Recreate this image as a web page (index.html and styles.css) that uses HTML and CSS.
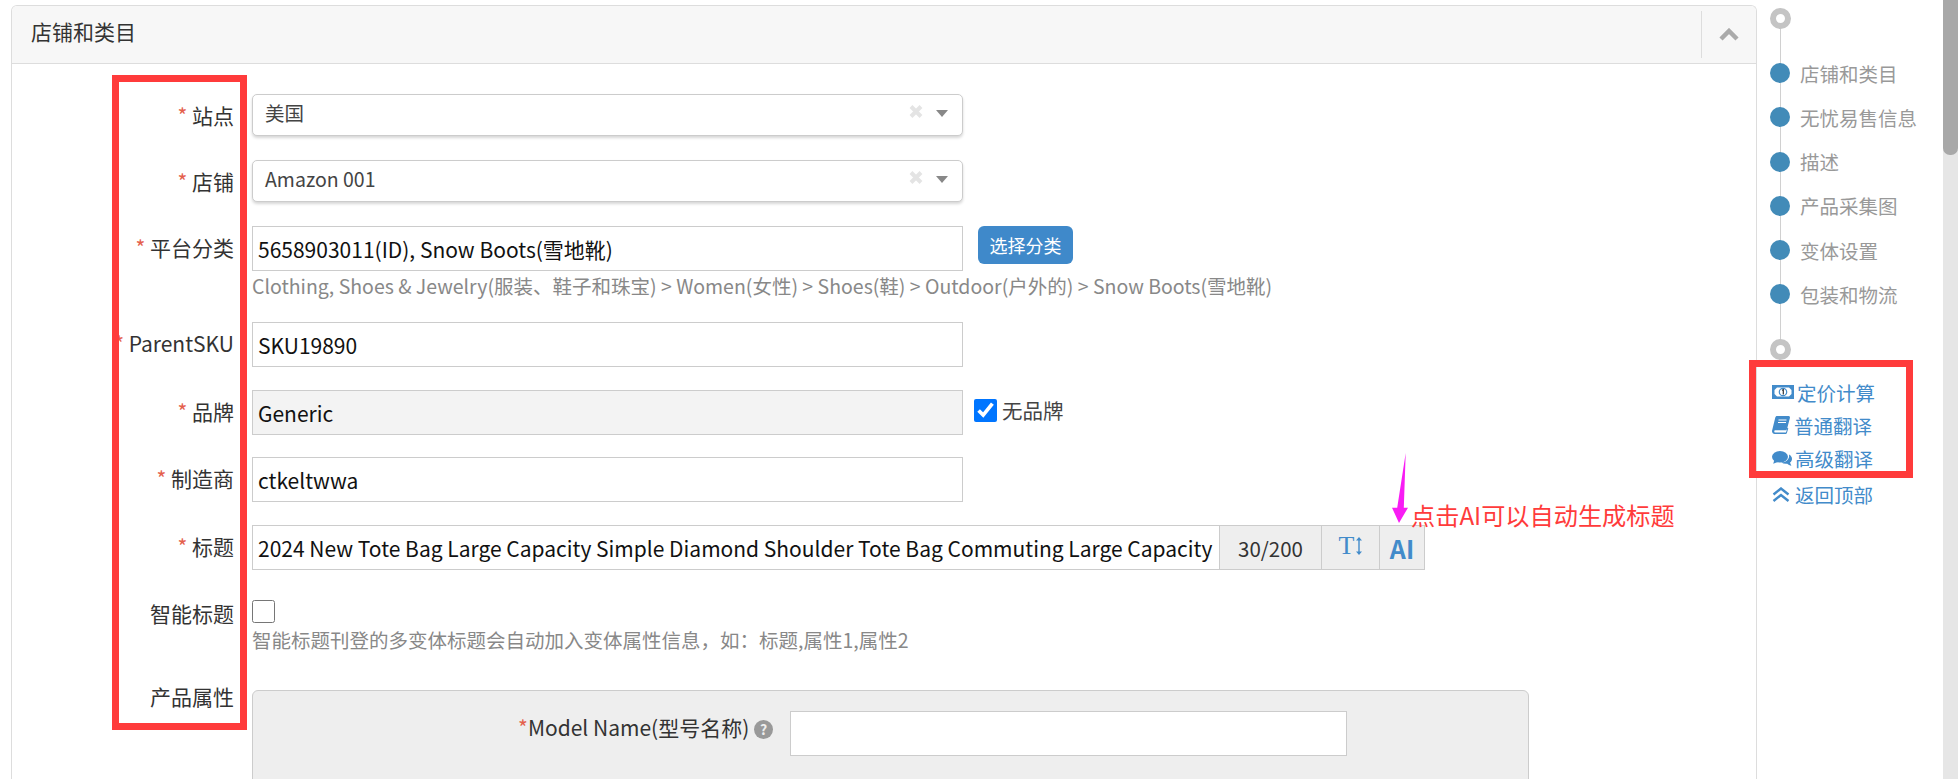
FILE: index.html
```html
<!DOCTYPE html>
<html lang="zh-CN">
<head>
<meta charset="utf-8">
<title>店铺和类目</title>
<link rel="stylesheet" href="styles.css">
</head>
<body>
<div class="page">
  <main class="main">
    <section class="panel">
      <header class="panel-head">
        <h2 class="panel-title">店铺和类目</h2>
        <div class="collapse">
          <svg class="chev" viewBox="0 0 20 13"><path d="M2 11 10 3l8 8" fill="none" stroke="#aaa" stroke-width="4.5"/></svg>
        </div>
      </header>
      <form class="form">
        <div class="row h66">
          <label class="lbl lbl-select"><i>*</i> 站点</label>
          <div class="select"><span class="select-text">美国</span>
            <svg class="clear" viewBox="0 0 14 13"><path d="M2 1.5 12 11.5M12 1.5 2 11.5" stroke="#e4e4e4" stroke-width="4"/></svg>
            <span class="caret"></span></div>
        </div>
        <div class="row h66">
          <label class="lbl lbl-select"><i>*</i> 店铺</label>
          <div class="select"><span class="select-text">Amazon 001</span>
            <svg class="clear" viewBox="0 0 14 13"><path d="M2 1.5 12 11.5M12 1.5 2 11.5" stroke="#e4e4e4" stroke-width="4"/></svg>
            <span class="caret"></span></div>
        </div>
        <div class="row h96">
          <label class="lbl"><i>*</i> 平台分类</label>
          <div class="col">
            <div class="line">
              <div class="input">5658903011(ID), Snow Boots(雪地靴)</div>
              <button class="btn" type="button">选择分类</button>
            </div>
            <p class="help help-cat">Clothing, Shoes &amp; Jewelry(服装、鞋子和珠宝) &gt; Women(女性) &gt; Shoes(鞋) &gt; Outdoor(户外的) &gt; Snow Boots(雪地靴)</p>
          </div>
        </div>
        <div class="row h68">
          <label class="lbl"><i>*</i> ParentSKU</label>
          <div class="input">SKU19890</div>
        </div>
        <div class="row h67">
          <label class="lbl"><i>*</i> 品牌</label>
          <div class="input input-disabled">Generic</div>
          <label class="nobrand"><input class="check" type="checkbox" checked> 无品牌</label>
        </div>
        <div class="row h68">
          <label class="lbl"><i>*</i> 制造商</label>
          <div class="input">ctkeltwwa</div>
        </div>
        <div class="row h75">
          <label class="lbl"><i>*</i> 标题</label>
          <div class="group">
            <div class="input input-title">2024 New Tote Bag Large Capacity Simple Diamond Shoulder Tote Bag Commuting Large Capacity</div>
            <span class="addon addon-count">30/200</span>
            <span class="addon addon-t"><span class="t-glyph">T</span><svg class="t-arrow" viewBox="0 0 6 18"><path d="M3 2v14" stroke="#428bca" stroke-width="1.4"/><path d="M0 3.6 3 0l3 3.6zM0 14.4 3 18l3-3.600z" fill="#428bca"/></svg></span>
            <span class="addon addon-ai">AI</span>
          </div>
        </div>
        <div class="row h90">
          <label class="lbl lbl-smart">智能标题</label>
          <div class="col">
            <input class="check check-smart" type="checkbox">
            <p class="help help-smart">智能标题刊登的多变体标题会自动加入变体属性信息，如：标题,属性1,属性2</p>
          </div>
        </div>
        <div class="row">
          <label class="lbl lbl-attr">产品属性</label>
          <div class="attrs">
            <div class="attr-row">
              <label class="attr-lbl"><i>*</i>Model Name(型号名称) <span class="q">?</span></label>
              <div class="input input-attr"></div>
            </div>
          </div>
        </div>
      </form>
    </section>
  </main>

  <aside class="side">
    <div class="timeline">
      <span class="ring"></span>
      <nav class="steps">
        <a class="step"><span class="dot"></span>店铺和类目</a>
        <a class="step"><span class="dot"></span>无忧易售信息</a>
        <a class="step"><span class="dot"></span>描述</a>
        <a class="step"><span class="dot"></span>产品采集图</a>
        <a class="step"><span class="dot"></span>变体设置</a>
        <a class="step"><span class="dot"></span>包装和物流</a>
      </nav>
      <span class="ring ring-end"></span>
    </div>
    <div class="links">
      <a class="link">
        <svg class="ico ico-money" viewBox="0 0 22 14"><rect width="22" height="14" fill="#428bca"/><path d="M5 2.500h12l2.500 2.500v4l-2.500 2.500H5L2.500 9V5z" fill="#fff"/><circle cx="11" cy="7" r="4.300" fill="#428bca"/><circle cx="11" cy="7" r="3.100" fill="#fff"/><path d="M10 5.200 11.300 4.600V9.400" fill="none" stroke="#333" stroke-width="1.200"/></svg>定价计算</a>
      <a class="link link-second">
        <svg class="ico ico-book" viewBox="0 0 18 18"><path d="M5 0h11.500c1 0 1.700.9 1.400 1.900L15 13c-.3.900-1 1.300-1.800 1.300H3.400c-1.500 0-1.500 2.200 0 2.200H14l1.400-4.700.9.500L14.900 17c-.2.600-.7 1-1.300 1H2.700C1 18-.4 16.200.1 14.400L3.300 1.600C3.500.7 4.200 0 5 0z" fill="#428bca"/><path d="M6.500 4h8M6 6.500h8" stroke="#fff" stroke-width="1"/></svg>普通翻译</a>
      <a class="link">
        <svg class="ico ico-chat" viewBox="0 0 20 15"><ellipse cx="8" cy="5.800" rx="8" ry="5.800" fill="#428bca"/><path d="M2.500 8.500 1.200 12.800 7 10.500z" fill="#428bca"/><path d="M17 3.600c1.900 1 3 2.600 3 4.300 0 1.500-.8 2.800-2 3.700.3 1 .7 2 1.400 3.200-1.600-.3-3-1.100-4.100-2.100-2.100.3-4.300-.1-6-1.100 4.500-.1 8.700-3.200 7.700-8z" fill="#428bca"/></svg>高级翻译</a>
      <a class="link link-down">
        <svg class="ico ico-top" viewBox="0 0 18 15"><path d="M1.500 7.500 9 1.500l7.500 6M1.500 14 9 8l7.500 6" fill="none" stroke="#428bca" stroke-width="2.400"/></svg>返回顶部</a>
    </div>
  </aside>

  <div class="scrollbar"><div class="thumb"></div></div>

  <div class="mark mark-labels"></div>
  <div class="mark mark-links"></div>
  <svg class="arrow" viewBox="0 0 16 70"><path d="M13.700 0 11.800 54.700H16L7 70 0 54.700H5.200z" fill="#f81cf4"/></svg>
  <div class="note">点击AI可以自动生成标题</div>
</div>
</body>
</html>
```

FILE: styles.css
```css
* { box-sizing: border-box; }
html, body { margin: 0; padding: 0; height: 100%; overflow: hidden; background: #fff; }
body { font-family: "Noto Sans CJK SC", "Noto Sans", sans-serif; font-size: 21px; color: #333; }
.page { position: relative; display: flex; height: 779px; width: 1958px; overflow: hidden; }

.main { width: 1757px; padding: 5px 0 0 11px; flex: none; }
.panel { border: 1px solid #ddd; border-bottom: 0; border-radius: 6px 6px 0 0; height: 774px; overflow: hidden; }
.panel-head { display: flex; align-items: center; justify-content: space-between; height: 58px; background: #f7f7f7; border-bottom: 1px solid #ddd; padding: 4px 0 4px 19px; }
.panel-title { margin: -8px 0 0; font-size: 21px; font-weight: 400; color: #333; }
.collapse { display: flex; align-items: center; justify-content: center; width: 55px; height: 47px; border-left: 1px solid #ddd; }
.chev { width: 20px; height: 13px; }

.form { padding: 30px 0 0 0; }
.row { display: flex; align-items: flex-start; }
.h66 { height: 66px; }
.h96 { height: 96px; }
.h68 { height: 68px; }
.h67 { height: 67px; }
.h75 { height: 75px; }
.h90 { height: 90px; }
.lbl { flex: none; width: 222px; margin-right: 18px; height: 45px; line-height: 42px; text-align: right; color: #333; white-space: nowrap; }
.lbl i, .attr-lbl i { font-style: normal; color: #e4604c; }
.lbl-select { height: 44px; line-height: 42px; }
.lbl-smart { height: 30px; line-height: 27px; }
.lbl-attr { margin-top: -15px; }

.select { position: relative; display: flex; align-items: center; width: 711px; height: 42px; padding-left: 12px; background: #fff; border: 1px solid #ccc; border-radius: 5px; box-shadow: 0 2px 3px rgba(0,0,0,.16); }
.select-text { color: #444; font-size: 19.5px; line-height: 38px; margin-top: -5px; }
.clear { position: absolute; right: 39px; top: 10px; width: 14px; height: 13px; }
.caret { position: absolute; right: 14px; top: 15px; width: 0; height: 0; border-left: 6px solid transparent; border-right: 6px solid transparent; border-top: 7px solid #888; }

.col { display: flex; flex-direction: column; align-items: flex-start; }
.line { display: flex; align-items: flex-start; }
.input { width: 711px; height: 45px; line-height: 44px; padding: 0 0 0 5px; border: 1px solid #ccc; background: #fff; color: #111; white-space: nowrap; overflow: hidden; }
.input-disabled { background: #f3f3f3; }
.btn { margin-left: 15px; width: 95px; height: 38px; padding: 0; border: 0; border-radius: 6px; background: #3f89ca; color: #fff; font: inherit; font-size: 18px; }
.help { margin: 0; color: #888; white-space: nowrap; }
.help-cat { margin-top: 1px; font-size: 19.5px; line-height: 28px; }
.help-smart { margin-top: 2px; font-size: 19.5px; line-height: 30px; }

.nobrand { display: flex; align-items: center; height: 40px; margin-left: 11px; color: #444; font-size: 20.5px; }
.check { width: 23px; height: 23px; margin: 0 5px 0 0; accent-color: #0075ff; }
.check-smart { margin: 0; }

.group { display: flex; align-items: flex-start; }
.input-title { width: 967px; border-right: 0; }
.addon { display: flex; align-items: center; justify-content: center; height: 45px; background: #eee; border: 1px solid #ccc; border-left: 0; color: #333; }
.addon-count { width: 103px; border-left: 1px solid #ccc; font-size: 20.5px; }
.addon-t { width: 58px; color: #428bca; }
.addon-ai { width: 45px; color: #428bca; font-weight: 700; font-size: 25px; }
.t-glyph { font-family: "Liberation Serif", serif; font-size: 26px; line-height: 1; margin-top: -3px; }
.t-arrow { width: 6px; height: 18px; margin: -3px 0 0 2px; }

.attrs { width: 1277px; height: 300px; background: #eee; border: 1px solid #ccc; border-radius: 6px 6px 0 0; padding-top: 20px; }
.attr-row { display: flex; align-items: flex-start; }
.attr-lbl { flex: none; width: 537px; height: 45px; padding-right: 17px; line-height: 32px; text-align: right; color: #333; white-space: nowrap; }
.q { display: inline-block; width: 19px; height: 19px; margin-left: 0; line-height: 19px; border-radius: 50%; background: #999; color: #eee; font-size: 14px; font-weight: 700; text-align: center; vertical-align: 1px; }
.input-attr { width: 557px; margin-left: 0; }

.side { flex: none; width: 186px; }
.timeline { position: relative; padding: 8px 0 0 13px; height: 360px; }
.timeline::before { content: ""; position: absolute; left: 22.500px; top: 18px; height: 330px; width: 1.500px; background: #d0d0d0; }
.ring { position: relative; display: block; width: 21px; height: 21px; border: 6px solid #c4c4c4; border-radius: 50%; background: #fff; }
.ring-end { margin-top: 22px; }
.steps { display: flex; flex-direction: column; margin-top: 22px; }
.step { position: relative; display: flex; align-items: center; height: 44.25px; color: #999; font-size: 19.5px; }
.dot { flex: none; width: 20px; height: 20px; margin-right: 10px; border-radius: 50%; background: #428bb8; }
.links { display: flex; flex-direction: column; padding: 15px 0 0 15px; }
.link { display: flex; align-items: center; height: 34px; color: #428bca; font-size: 19.5px; }
.link-second { height: 32px; }
.link-down { margin-top: 2px; }
.ico { flex: none; margin-right: 3px; }
.ico-money { width: 22px; height: 14px; }
.ico-book { width: 18px; height: 18px; margin-right: 4px; }
.ico-chat { width: 20px; height: 15px; }
.ico-top { width: 18px; height: 15px; margin-right: 5px; }

.scrollbar { flex: none; width: 15px; background: #e6e6e6; }
.thumb { height: 155px; background: #a8a8a8; border-radius: 0 0 7px 7px; }

.mark { position: absolute; border: 7px solid #ff3b3b; pointer-events: none; }
.mark-labels { left: 112px; top: 75px; width: 135px; height: 655px; }
.mark-links { left: 1749px; top: 360px; width: 164px; height: 118px; }
.arrow { position: absolute; left: 1392px; top: 453px; width: 16px; height: 70px; }
.note { position: absolute; left: 1411px; top: 497px; font-size: 24.2px; line-height: 36px; color: #ff3b3b; white-space: nowrap; }
```
